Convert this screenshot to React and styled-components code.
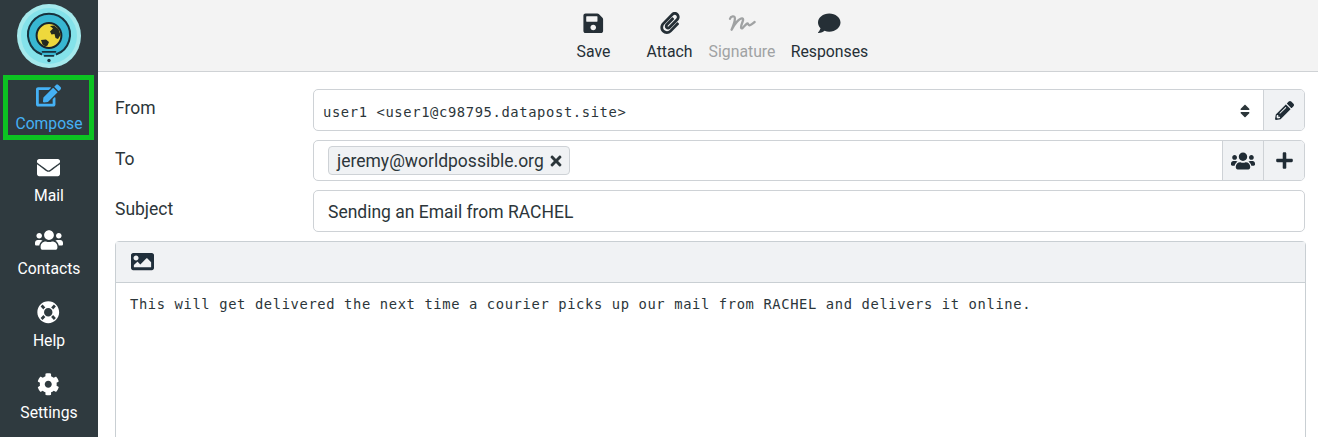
import React from "react";
import styled, { createGlobalStyle } from "styled-components";
import {
  FaEdit, FaEnvelope, FaUsers, FaLifeRing, FaCog, FaSave, FaPaperclip,
  FaComment, FaPencilAlt, FaPlus, FaTimes, FaImage, FaSort,
} from "react-icons/fa";

const GlobalStyle = createGlobalStyle`
  * { box-sizing: border-box; }
  body { margin: 0; overflow: hidden; background: #fff; color: #2c363a; font-family: Roboto, sans-serif; }
  svg { display: block; flex: none; }
`;

const Page = styled.div`
  display: flex;
  height: 437px;
  overflow: hidden;
`;

const Sidebar = styled.nav`
  width: 98px;
  flex: none;
  background: #2f3a3f;
  display: flex;
  flex-direction: column;
  align-items: center;
  padding: 4px 1px 0 0;
`;

const MenuItem = styled.a`
  width: 91px;
  height: 65px;
  margin-top: ${(p) => (p.$active ? "7px" : "7.3px")};
  flex: none;
  display: flex;
  flex-direction: column;
  align-items: center;
  border: 5px solid ${(p) => (p.$active ? "#0cc422" : "transparent")};
  color: ${(p) => (p.$active ? "#45b1f5" : "#fff")};
`;

const MenuIcon = styled.span`
  height: 31px;
  flex: none;
  display: flex;
  align-items: center;
  justify-content: center;
  font-size: ${(p) => p.$size}px;
`;

const MenuLabel = styled.span`
  flex: none;
  padding-left: 1px;
  font-size: 15.7px;
  line-height: 26px;
`;

const Main = styled.main`
  flex: 1;
  min-width: 0;
  display: flex;
  flex-direction: column;
`;

const Toolbar = styled.header`
  height: 72px;
  flex: none;
  background: #f3f3f3;
  border-bottom: 1px solid #cfd2d5;
  display: flex;
  padding-left: 464px;
`;

const ToolButton = styled.a`
  width: ${(p) => p.$width}px;
  padding-top: 9px;
  display: flex;
  flex-direction: column;
  align-items: center;
  color: ${(p) => (p.$disabled ? "#a0a2a3" : "#252f36")};
`;

const ToolIcon = styled.span`
  height: 28px;
  display: flex;
  align-items: center;
  font-size: ${(p) => p.$size}px;
`;

const ToolLabel = styled.span`
  font-size: 15.8px;
  line-height: 30px;
  white-space: nowrap;
`;

const Form = styled.div`
  padding: 17px 13px 0 17px;
`;

const Row = styled.div`
  display: flex;
  height: 42px;
  margin-bottom: ${(p) => p.$gap}px;
`;

const Label = styled.label`
  width: 198px;
  flex: none;
  font-size: 17.5px;
  line-height: 39px;
`;

const Field = styled.div`
  flex: 1;
  height: ${(p) => p.$height || 42}px;
  display: flex;
  border: 1px solid #ced2d6;
  border-radius: 5px;
  overflow: hidden;
`;

const SelectValue = styled.div`
  flex: 1;
  display: flex;
  justify-content: space-between;
  padding: 0 10px 0 9px;
  font: 13.8px/45px "DejaVu Sans Mono", monospace;
  letter-spacing: 0.615px;
`;

const SortIcon = styled(FaSort)`
  font-size: 16px;
  margin-top: 13px;
`;

const Recipients = styled.div`
  flex: 1;
  display: flex;
  align-items: flex-start;
  padding: 5px 0 0 14px;
`;

const Chip = styled.span`
  height: 29px;
  display: flex;
  align-items: center;
  gap: 4px;
  padding: 0 5px 0 8px;
  background: #f0f2f4;
  border: 1px solid #ced2d6;
  border-radius: 4px;
  font-size: 17.5px;
`;

const TextValue = styled.div`
  padding-left: 14px;
  font-size: 17.5px;
  line-height: 42px;
`;

const AddOn = styled.button`
  width: 41px;
  padding: 0;
  border: 0;
  border-left: 1px solid #ced2d6;
  background: #f0f2f4;
  color: #202c35;
  display: flex;
  align-items: center;
  justify-content: center;
  font-size: ${(p) => p.$size}px;
`;

const Editor = styled.section`
  margin-right: -1px;
  height: 220px;
  border: 1px solid #c9cfd3;
  border-radius: 4px 4px 0 0;
`;

const EditorBar = styled.div`
  height: 41px;
  background: #f0f2f4;
  border-bottom: 1px solid #c9cfd3;
  display: flex;
  align-items: center;
  padding: 0 0 1px 15px;
  color: #202f3b;
  font-size: 23px;
`;

const Message = styled.div`
  padding: 10px 14px;
  font: 13.8px/22px "DejaVu Sans Mono", monospace;
  letter-spacing: 0.615px;
  white-space: nowrap;
`;

const Logo = () => (
  <svg width="64" height="64" viewBox="0 0 64 64">
    <circle cx="32" cy="32" r="32" fill="#a5e9ec" />
    <circle cx="32" cy="32" r="28" fill="#84e2ea" />
    <circle cx="32" cy="31" r="21" fill="#38b7d2" />
    <path d="M25 50.5A21 21 0 1 1 39 50.5" fill="none" stroke="#17313d" strokeWidth="2" />
    <path d="M25.5 47.8h13M27.500 51.800h9" stroke="#17313d" strokeWidth="1.7" strokeLinecap="round" />
    <circle cx="32" cy="56.5" r="1.7" fill="#17313d" />
    <circle cx="32" cy="31.5" r="12.4" fill="#eed83c" stroke="#17252c" strokeWidth="2" />
    <path d="M33 22l4-.5 4.500 3.500 2 6-2.500 4-2.500-1-1-4-3 .5-1.500-3 3-3zM24 36l5-.5 3 2.500-1.500 3.500-2 1-3-2z" fill="#24291f" />
  </svg>
);

const SignatureIcon = () => (
  <svg width="28" height="20" viewBox="0 0 28 20" fill="none" stroke="currentColor" strokeWidth="2.3" strokeLinecap="round" strokeLinejoin="round">
    <path d="M2 5.800C2.700 3.200 6.800 2.200 6.900 5.200C7 8 5.600 12 3.600 16.700C6.600 10.600 11.500 5 14.300 5.400C17 6 12 12.600 13.200 15C14.300 16.900 17 11.600 19 10.600C20.500 10 20 12.500 21.600 12.300C23.500 12 25 10.300 26.600 9" />
  </svg>
);

const menu = [
  { label: "Compose", Icon: FaEdit, size: 25, active: true },
  { label: "Mail", Icon: FaEnvelope, size: 23 },
  { label: "Contacts", Icon: FaUsers, size: 28 },
  { label: "Help", Icon: FaLifeRing, size: 22.5 },
  { label: "Settings", Icon: FaCog, size: 22.5 },
];

const tools = [
  { label: "Save", Icon: FaSave, size: 22.5, width: 63 },
  { label: "Attach", Icon: FaPaperclip, size: 22, width: 89 },
  { label: "Signature", Icon: SignatureIcon, size: 22, width: 56, disabled: true },
  { label: "Responses", Icon: FaComment, size: 22.5, width: 119 },
];

export default function App() {
  return (
    <Page>
      <GlobalStyle />
      <Sidebar>
        <Logo />
        {menu.map(({ label, Icon, size, active }) => (
          <MenuItem key={label} $active={active}>
            <MenuIcon $size={size}><Icon /></MenuIcon>
            <MenuLabel>{label}</MenuLabel>
          </MenuItem>
        ))}
      </Sidebar>
      <Main>
        <Toolbar>
          {tools.map(({ label, Icon, size, width, disabled }) => (
            <ToolButton key={label} $width={width} $disabled={disabled}>
              <ToolIcon $size={size}><Icon /></ToolIcon>
              <ToolLabel>{label}</ToolLabel>
            </ToolButton>
          ))}
        </Toolbar>
        <Form>
          <Row $gap={9}>
            <Label>From</Label>
            <Field>
              <SelectValue>user1 &lt;user1@c98795.datapost.site&gt;<SortIcon /></SelectValue>
              <AddOn $size={19}><FaPencilAlt /></AddOn>
            </Field>
          </Row>
          <Row $gap={8}>
            <Label>To</Label>
            <Field $height={41}>
              <Recipients>
                <Chip>jeremy@worldpossible.org<FaTimes size={16} /></Chip>
              </Recipients>
              <AddOn $size={24}><FaUsers /></AddOn>
              <AddOn $size={19}><FaPlus /></AddOn>
            </Field>
          </Row>
          <Row $gap={9}>
            <Label>Subject</Label>
            <Field><TextValue>Sending an Email from RACHEL</TextValue></Field>
          </Row>
          <Editor>
            <EditorBar><FaImage /></EditorBar>
            <Message>This will get delivered the next time a courier picks up our mail from RACHEL and delivers it online.</Message>
          </Editor>
        </Form>
      </Main>
    </Page>
  );
}
